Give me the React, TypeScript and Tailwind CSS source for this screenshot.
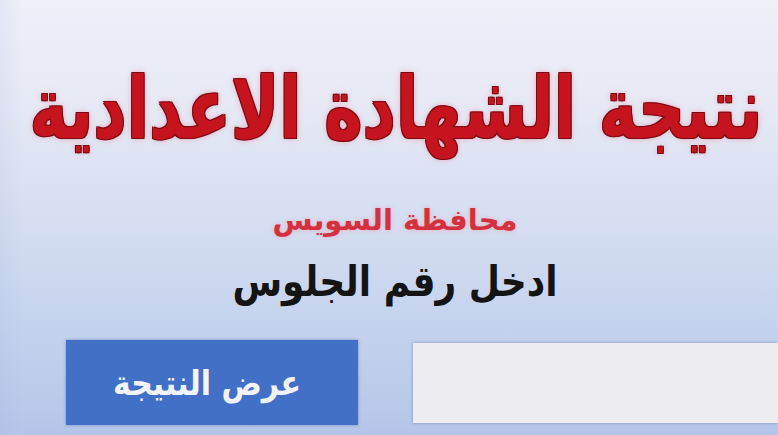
import React from "react";

export default function App() {
  return (
    <div
      dir="rtl"
      className="relative w-[778px] h-[435px] overflow-hidden bg-[linear-gradient(180deg,#eff0f8_0%,#e6e9f5_25%,#cfdaf0_60%,#b4c6e8_100%)] font-['DejaVu_Sans',sans-serif]"
    >
      <div className="absolute inset-y-0 left-0 w-[24px] bg-[linear-gradient(90deg,rgba(150,170,220,0.12),rgba(150,170,220,0))]" />
      <div className="relative flex flex-col items-center">
        <h1 className="mt-[54px] h-[110px] leading-[110px] whitespace-nowrap text-[65px] font-bold text-[#c6141f] tracking-[-1px] scale-y-[1.32] [text-shadow:1px_1px_0_#7d0913,-1px_-1px_0_#7d0913,1px_-1px_0_#7d0913,-1px_1px_0_#7d0913,0_0_6px_rgba(240,90,110,0.6)] translate-x-[7px]">
          نتيجة الشهادة الاعدادية
        </h1>
        <div className="mt-[36px] h-[40px] leading-[40px] whitespace-nowrap text-[29px] font-bold text-[#d2323f] [text-shadow:0_0_4px_rgba(255,140,150,0.6)] translate-x-[6px]">
          محافظة السويس
        </div>
        <div className="mt-[14px] h-[56px] leading-[56px] whitespace-nowrap text-[36px] font-bold text-[#141414] scale-y-[1.18] translate-x-[6px]">
          ادخل رقم الجلوس
        </div>
      </div>
      <div dir="ltr" className="relative mt-[30px] flex items-start pl-[66px]">
        <div
          dir="rtl"
          className="flex h-[85px] w-[292px] items-center justify-center bg-[#4270c6] shadow-[0_0_3px_rgba(60,90,160,0.5)]"
        >
          <span className="whitespace-nowrap text-[30px] font-bold text-[#f2f4fb] scale-y-[1.15] -translate-x-[5px]">
            عرض النتيجة
          </span>
        </div>
        <div className="ml-[55px] mt-[3px] h-[80px] flex-1 bg-[#ececf1] shadow-[0_0_3px_rgba(90,110,160,0.6)]" />
      </div>
    </div>
  );
}
